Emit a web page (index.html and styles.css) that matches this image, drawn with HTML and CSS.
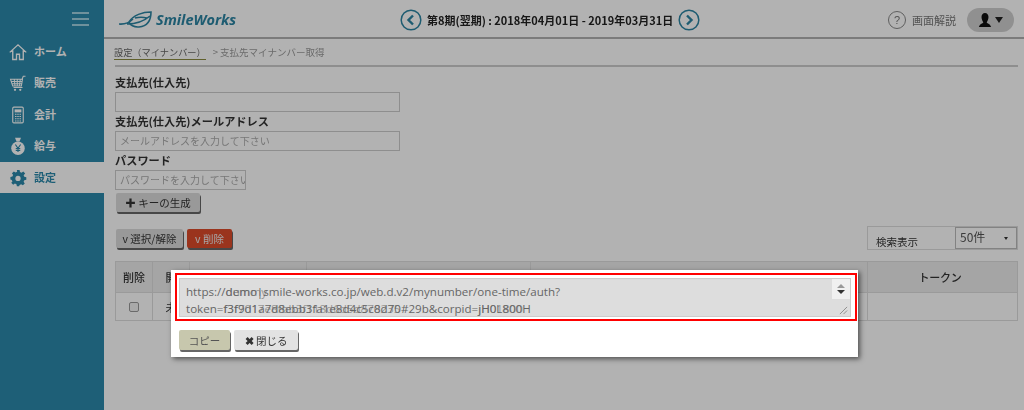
FILE: index.html
```html
<!DOCTYPE html>
<html lang="ja">
<head>
<meta charset="utf-8">
<title>支払先マイナンバー取得</title>
<link rel="stylesheet" href="styles.css">
</head>
<body>
<div class="app">
  <aside class="sidebar">
    <div class="burger"><span></span><span></span><span></span></div>
    <nav class="nav">
      <a class="nav-item"><svg class="nav-icon" viewBox="0 0 24 24"><path d="M1 12.500 12 2.500l11 10M5 9.500V22h5v-7h4v7h5V9.500" fill="none" stroke="currentColor" stroke-width="1.800"/></svg><b>ホーム</b></a>
      <a class="nav-item"><svg class="nav-icon" viewBox="0 0 24 24"><path d="M2 7h16l-1.500 9H5zM3 10h14.500M4 13h13M7 7l1 9M11 7v9M15 7l-1 9M17 8l2-5h3M6 18h12" fill="none" stroke="currentColor" stroke-width="1.400"/><circle cx="8" cy="21" r="1.500" fill="currentColor"/><circle cx="15" cy="21" r="1.500" fill="currentColor"/></svg><b>販売</b></a>
      <a class="nav-item"><svg class="nav-icon" viewBox="0 0 24 24"><rect x="5" y="1.500" width="14" height="21" rx="1.500" fill="none" stroke="currentColor" stroke-width="1.500"/><rect x="7.500" y="4.500" width="9" height="4" fill="currentColor"/><path d="M8 11h2M11 11h2M14 11h2M8 14h2M11 14h2M14 14h2M8 17h2M11 17h2M14 17h2M8 20h2M11 20h2M14 20h2" stroke="currentColor" stroke-width="1.500"/></svg><b>会計</b></a>
      <a class="nav-item"><svg class="nav-icon" viewBox="0 0 24 24"><path d="M8 1h8l-2 5h-4z" fill="currentColor"/><circle cx="12" cy="15" r="9" fill="currentColor"/><path d="m8.500 10 3.500 5 3.500-5M12 15v5M9 15.500h6M9 18h6" fill="none" stroke="#2b89ab" stroke-width="1.500"/></svg><b>給与</b></a>
      <a class="nav-item nav-item-active"><svg class="nav-icon" viewBox="0 0 24 24"><path d="M10 1h4l.6 3 2.300 1 2.600-1.700 2.800 2.800L20 8.700l1 2.300 3 .6v3.800l-3 .6-1 2.300 1.700 2.600-2.800 2.800-2.600-1.700-2.300 1-.6 2H10l-.6-3-2.300-1-2.600 1.700-2.800-2.800L3.400 18l-1-2.300-2-.6v-3.800l3-.6 1-2.300-1.700-2.600 2.800-2.800 2.600 1.700 2.300-1z" transform="translate(1.500 .5) scale(.9)" fill="currentColor"/><circle cx="12" cy="12.500" r="3.500" fill="#fff"/></svg><b>設定</b></a>
    </nav>
  </aside>
  <div class="main">
    <header class="topbar">
      <div class="logo">
        <svg class="logo-mark" viewBox="0 0 33 17"><path d="M10 11C14 4 24 1 32 1c0 6-2 14-12 15-5 .5-9-2-10-5zM0 13c6 .5 10-1 14-5M8 13c8 0 16-2 23-8M16 7c4-1 8-1 12 0" fill="none" stroke="#2b84a3" stroke-width="1.600"/></svg>
        <span class="logo-text">SmileWorks</span>
      </div>
      <div class="period">
        <svg class="round-arrow" viewBox="0 0 22 22"><circle cx="11" cy="11" r="9.800" fill="none" stroke="currentColor" stroke-width="1.500"/><path d="m13 6.500-4.500 4.500 4.500 4.500" fill="none" stroke="currentColor" stroke-width="2.400"/></svg>
        <span class="period-text">第8期(翌期) : 2018年04月01日 - 2019年03月31日</span>
        <svg class="round-arrow" viewBox="0 0 22 22"><circle cx="11" cy="11" r="9.800" fill="none" stroke="currentColor" stroke-width="1.500"/><path d="m9 6.500 4.500 4.500L9 15.500" fill="none" stroke="currentColor" stroke-width="2.400"/></svg>
      </div>
      <div class="help">
        <span class="help-mark">?</span>
        <span class="help-text">画面解説</span>
        <span class="user-pill"><svg class="user-icon" viewBox="0 0 16 16"><path d="M8 0c2.500 0 4 2 4 4.500S10.500 10 10 10.500c0 1.500 4 1.500 5 5.500H1c1-4 5-4 5-5.500C5.500 10 4 7 4 4.500S5.500 0 8 0z" fill="currentColor"/></svg><span class="caret"></span></span>
      </div>
    </header>
    <div class="content">
      <div class="breadcrumb"><span class="crumb-link">設定（マイナンバー）</span><span class="crumb-current">&gt; 支払先マイナンバー取得</span></div>
      <form class="form">
        <label class="field-label">支払先(仕入先)</label>
        <div class="input input-wide"></div>
        <label class="field-label">支払先(仕入先)メールアドレス</label>
        <div class="input input-wide">メールアドレスを入力して下さい</div>
        <label class="field-label">パスワード</label>
        <div class="input input-short">パスワードを入力して下さい</div>
        <button type="button" class="btn btn-gen"><b>✚</b> キーの生成</button>
      </form>
      <div class="toolbar">
        <div class="toolbar-left">
          <button type="button" class="btn btn-select">v 選択/解除</button>
          <button type="button" class="btn btn-delete">v 削除</button>
        </div>
        <div class="search-size"><span class="search-label">検索表示</span><span class="select">50件<i class="select-caret"></i></span></div>
      </div>
      <table class="table">
        <thead><tr><th class="c1">削除</th><th class="c2">開</th><th class="c3"></th><th class="c4"></th><th class="c5"></th><th class="c6">トークン</th></tr></thead>
        <tbody><tr><td><span class="check"></span></td><td>未</td><td></td><td></td><td></td><td></td></tr></tbody>
      </table>
    </div>
  </div>
</div>
<div class="dim"></div>
<div class="modal">
  <div class="highlight">
    <div class="url-box">
      <div class="url-line">https://<span class="stack"><span class="ghost">dummy</span>demo</span>|smile-works.co.jp/web.d.v2/mynumber/one-time/auth?</div>
      <div class="url-line">token=<span class="stack"><span class="ghost">f3f7017e8fbb3f118d6d5d870235</span>f3f9d1a7d8ebb3fa1e8d4c5c8d70</span>#29b&amp;corpid=<span class="stack"><span class="ghost">jH01800</span>jH0L800H</span></div>
      <div class="spinner"><i class="spin-up"></i><i class="spin-down"></i></div>
      <svg class="grip" viewBox="0 0 10 10"><path d="M1 9 9 1M5 9l4-4" stroke="#888" stroke-width="1"/></svg>
    </div>
  </div>
  <div class="modal-actions">
    <button type="button" class="btn btn-copy">コピー</button>
    <button type="button" class="btn btn-close"><b>✖</b> 閉じる</button>
  </div>
</div>
</body>
</html>
```

FILE: styles.css
```css
* { box-sizing: border-box; }
html, body { margin: 0; height: 100%; }
body {
  width: 1024px;
  height: 410px;
  overflow: hidden;
  position: relative;
  background: #fff;
  color: #333;
  font-family: "Noto Sans CJK JP", "Noto Sans", sans-serif;
  font-size: 11px;
}
.app { display: flex; height: 410px; filter: blur(.45px); }
.sidebar { width: 104px; flex: none; background: #2b89ab; color: #fff; }
.burger { display: flex; flex-direction: column; gap: 4px; align-items: flex-end; padding: 12px 15px 0 0; height: 36px; }
.burger span { display: block; width: 17px; height: 2px; background: #9fd0e0; }
.nav { display: flex; flex-direction: column; }
.nav-item { display: flex; align-items: center; height: 31.500px; padding-left: 9px; gap: 7px; color: #fff; }
.nav-item b { font-size: 11px; font-weight: 700; margin-top: -2px; }
.nav-item-active { background: #fff; color: #2b89ab; height: 31px; }
.nav-icon { width: 18px; height: 20px; flex: none; }
.main { flex: 1; min-width: 0; display: flex; flex-direction: column; }
.topbar { height: 39px; flex: none; display: flex; align-items: center; border-bottom: 2px solid #b0b0b0; padding-top: 2px; }
.logo { width: 296px; display: flex; align-items: center; padding-left: 15px; gap: 4px; }
.logo-mark { width: 33px; height: 17px; }
.logo-text { font-family: "Open Sans", sans-serif; font-style: italic; font-weight: 700; font-size: 14.500px; color: #2b84a3; }
.period { display: flex; align-items: center; gap: 5px; width: 324px; color: #2b84a3; }
.period-text { color: #222; font-weight: 700; font-size: 11px; white-space: nowrap; }
.round-arrow { width: 22px; height: 22px; flex: none; }
.help { margin-left: auto; display: flex; align-items: center; padding-right: 10px; color: #777; }
.help-mark { width: 18px; height: 18px; border: 1.500px solid #888; border-radius: 50%; display: flex; align-items: center; justify-content: center; font-size: 11px; font-family: "Liberation Sans", sans-serif; }
.help-text { margin: 0 11px 0 6px; font-size: 11px; }
.user-pill { width: 47px; height: 24px; border-radius: 12px; background: #cfcfcf; display: flex; align-items: center; justify-content: center; gap: 3px; color: #111; }
.user-icon { width: 14px; height: 16px; }
.caret { width: 0; height: 0; border: 4px solid transparent; border-top: 6px solid #222; border-bottom: 0; }
.content { flex: 1; padding: 5px 6px 0 11px; min-height: 0; }
.breadcrumb { height: 23px; border-bottom: 2px solid #ccc; font-size: 9.500px; color: #999; line-height: 17px; }
.crumb-link { color: #666; border-bottom: 1px solid #8a8a40; margin: 0 7px 0 -1px; font-size: 9.200px; display: inline-block; line-height: 13px; }
.form { display: flex; flex-direction: column; align-items: flex-start; padding-top: 5px; }
.field-label { font-size: 11.200px; font-weight: 700; color: #333; height: 20px; line-height: 20px; }
.input { height: 20px; border: 1px solid #ccc; font-size: 10px; color: #aaa; line-height: 18px; padding-left: 4px; white-space: nowrap; overflow: hidden; margin-bottom: -1px; background: #fff; }
.input-wide { width: 285px; }
.input-short { width: 131px; margin-bottom: 3px; }
.btn { border: 0; border-radius: 2px; font-family: inherit; font-size: 10.500px; color: #333; height: 19px; padding: 0; box-shadow: 1px 2px 0 #666; background: #dcdcdc; line-height: 17px; }
.btn-gen { width: 84px; margin-left: 1px; }
.toolbar { display: flex; justify-content: space-between; align-items: flex-start; margin-top: 14px; height: 35px; }
.toolbar-left { display: flex; gap: 4px; padding: 3px 0 0 1px; }
.btn-select { width: 67px; }
.btn-delete { width: 45px; background: #dd4b2a; color: #eee; }
.search-size { width: 151px; height: 24px; border: 1px solid #ddd; display: flex; justify-content: space-between; }
.search-label { padding: 7px 0 0 8px; font-size: 10.500px; }
.select { width: 62px; height: 22px; border: 1px solid #bbb; font-size: 12px; color: #555; padding-left: 4px; line-height: 18px; position: relative; }
.select-caret { position: absolute; right: 8px; top: 9px; width: 0; height: 0; border: 2.500px solid transparent; border-top: 3px solid #333; border-bottom: 0; }
.table { width: 902px; border-collapse: collapse; table-layout: fixed; font-size: 11px; }
.table th { height: 31px; background: #ececec; border: 1px solid #ddd; font-weight: 500; color: #333; }
.c6 { letter-spacing: -.2px; padding-right: 6px; }
.table td { height: 28px; border: 1px solid #ddd; text-align: center; }
.c1 { width: 37px; } .c2 { width: 37px; } .c3 { width: 117px; } .c4 { width: 224px; } .c5 { width: 337px; } .c6 { width: 150px; }
.check { display: inline-block; width: 10px; height: 10px; border: 1px solid #999; border-radius: 2px; background: #f3f3f3; }
.dim { position: absolute; inset: 0; background: rgba(0, 0, 0, .3); }
.modal { position: absolute; left: 171px; top: 270px; width: 687px; height: 87px; background: #fff; box-shadow: 2px 2px 5px rgba(0, 0, 0, .55); padding: 3px 1px 0 4px; filter: blur(.35px); }
.highlight { border: 2px solid #f00; padding: 3px 4px 2px 2px; height: 48px; }
.url-box { position: relative; background: #ddd; border: 1px solid #ccc; height: 39px; padding: 4px 0 0 6px; color: #666; font-family: "Open Sans", sans-serif; font-size: 11.600px; line-height: 17px; }
.url-line { white-space: nowrap; }
.stack { position: relative; display: inline-block; }
.ghost { position: absolute; left: 0; top: 0; opacity: .6; }
.spinner { position: absolute; top: 0; right: 0; width: 18px; height: 20px; background: #f0f0f0; display: flex; flex-direction: column; align-items: center; justify-content: center; gap: 2px; }
.spin-up { width: 0; height: 0; border: 4px solid transparent; border-bottom: 4px solid #999; border-top: 0; }
.spin-down { width: 0; height: 0; border: 4px solid transparent; border-top: 4px solid #333; border-bottom: 0; }
.grip { position: absolute; right: 2px; bottom: 1px; width: 9px; height: 9px; }
.modal-actions { display: flex; gap: 4px; padding: 9px 0 0 4px; }
.btn-copy { width: 51px; height: 20px; background: #c7c7ad; color: #555; }
.btn-close { width: 64px; height: 20px; background: #e2e2e2; }
```
